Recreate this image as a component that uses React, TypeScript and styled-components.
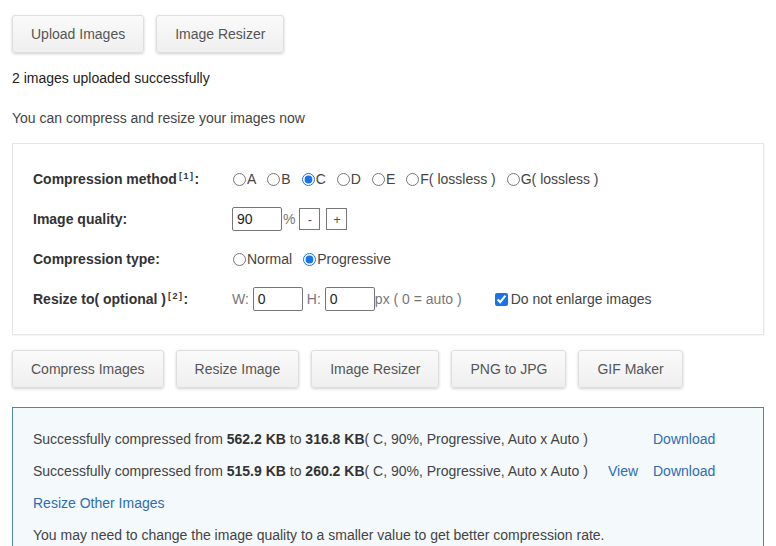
import React, { useState } from "react";
import styled, { createGlobalStyle } from "styled-components";

const GlobalStyle = createGlobalStyle`
  body {
    margin: 0;
    background: #fff;
    font-family: Arial, "Liberation Sans", sans-serif;
    font-size: 14px;
    color: #333;
  }
`;

type Result = {
  from: string;
  to: string;
  info: string;
  view?: boolean;
};

const results: Result[] = [
  { from: "562.2 KB", to: "316.8 KB", info: "( C, 90%, Progressive, Auto x Auto )" },
  { from: "515.9 KB", to: "260.2 KB", info: "( C, 90%, Progressive, Auto x Auto )", view: true },
];

const methods = ["A", "B", "C", "D", "E", "F( lossless )", "G( lossless )"];

const App: React.FC = () => {
  const [method, setMethod] = useState("C");
  const [quality, setQuality] = useState(90);
  const [type, setType] = useState("Progressive");
  const [width, setWidth] = useState("0");
  const [height, setHeight] = useState("0");
  const [noEnlarge, setNoEnlarge] = useState(true);

  return (
    <Page>
      <GlobalStyle />
      {/* 상단 버튼 */}
      <ButtonRow>
        <Button>Upload Images</Button>
        <Button>Image Resizer</Button>
      </ButtonRow>

      <Status>2 images uploaded successfully</Status>
      <Hint>You can compress and resize your images now</Hint>

      {/* 옵션 패널 */}
      <Panel>
        <FormRow>
          <Label>
            Compression method<Sup>[1]</Sup>:
          </Label>
          <Controls>
            {methods.map((m) => (
              <Option key={m} gap={10}>
                <Radio
                  type="radio"
                  name="method"
                  checked={method === m}
                  onChange={() => setMethod(m)}
                />
                {m}
              </Option>
            ))}
          </Controls>
        </FormRow>

        <FormRow>
          <Label>Image quality:</Label>
          <Controls>
            <TextInput
              value={quality}
              onChange={(e) => setQuality(Number(e.target.value) || 0)}
            />
            <Unit>%</Unit>
            <StepButton onClick={() => setQuality((q) => Math.max(0, q - 1))}>-</StepButton>
            <StepButton onClick={() => setQuality((q) => Math.min(100, q + 1))}>+</StepButton>
          </Controls>
        </FormRow>

        <FormRow>
          <Label>Compression type:</Label>
          <Controls>
            {["Normal", "Progressive"].map((t) => (
              <Option key={t} gap={10}>
                <Radio
                  type="radio"
                  name="type"
                  checked={type === t}
                  onChange={() => setType(t)}
                />
                {t}
              </Option>
            ))}
          </Controls>
        </FormRow>

        <FormRow>
          <Label>
            Resize to( optional )<Sup>[2]</Sup>:
          </Label>
          <Controls>
            <Muted>W:</Muted>
            <TextInput value={width} onChange={(e) => setWidth(e.target.value)} />
            <Muted lead>H:</Muted>
            <TextInput value={height} onChange={(e) => setHeight(e.target.value)} />
            <Muted>px ( 0 = auto )</Muted>
            <CheckLabel>
              <Checkbox
                type="checkbox"
                checked={noEnlarge}
                onChange={(e) => setNoEnlarge(e.target.checked)}
              />
              Do not enlarge images
            </CheckLabel>
          </Controls>
        </FormRow>
      </Panel>

      {/* 작업 버튼 */}
      <ButtonRow>
        <Button>Compress Images</Button>
        <Button>Resize Image</Button>
        <Button>Image Resizer</Button>
        <Button>PNG to JPG</Button>
        <Button>GIF Maker</Button>
      </ButtonRow>

      {/* 결과 */}
      <ResultBox>
        {results.map((r) => (
          <ResultRow key={r.from}>
            <span>
              Successfully compressed from <b>{r.from}</b> to <b>{r.to}</b>
              {r.info}
            </span>
            <span>{r.view && <Link href="#">View</Link>}</span>
            <Link href="#">Download</Link>
          </ResultRow>
        ))}
        <Line>
          <Link href="#">Resize Other Images</Link>
        </Line>
        <Line>
          You may need to change the image quality to a smaller value to get better
          compression rate.
        </Line>
      </ResultBox>
    </Page>
  );
};

export default App;

// Styled Components
const Page = styled.div`
  padding: 15px 12px 0;
`;

const ButtonRow = styled.div`
  display: flex;
  gap: 12px;
`;

const Button = styled.button`
  height: 38px;
  padding: 0 18px;
  font-family: Arial, "Liberation Sans", sans-serif;
  font-size: 14px;
  color: #555;
  background: linear-gradient(#fafafa, #efefef);
  border: 1px solid #dedede;
  border-radius: 3px;
  box-shadow: 0 1px 3px rgba(0, 0, 0, 0.18);
  cursor: pointer;
`;

const Status = styled.p`
  margin: 17px 0 0;
  line-height: 16px;
  color: #222;
`;

const Hint = styled.p`
  margin: 24px 0 0;
  line-height: 16px;
  color: #444;
`;

const Panel = styled.div`
  margin: 17px 0 15px;
  padding: 15px 20px 15px;
  border: 1px solid #e6e6e6;
  box-shadow: 1px 1px 1px rgba(0, 0, 0, 0.03);
`;

const FormRow = styled.div`
  display: flex;
  align-items: center;
  height: 40px;
`;

const Label = styled.div`
  width: 199px;
  font-weight: bold;
  color: #333;
`;

const Sup = styled.sup`
  font-size: 9px;
  letter-spacing: 1.5px;
  margin-left: 2px;
  vertical-align: 5px;
  line-height: 0;
`;

const Controls = styled.div`
  display: flex;
  align-items: center;
  color: #444;
`;

const Option = styled.label<{ gap: number }>`
  display: flex;
  align-items: center;
  margin-right: ${(p) => p.gap}px;
`;

const Radio = styled.input`
  width: 13px;
  height: 13px;
  margin: 0 1px 0 1px;
  accent-color: #1a73e8;
`;

const TextInput = styled.input`
  width: 50px;
  height: 24px;
  box-sizing: border-box;
  padding: 0 4px;
  border: 1px solid #767676;
  border-radius: 2px;
  font-family: Arial, "Liberation Sans", sans-serif;
  font-size: 14px;
  color: #222;
`;

const Unit = styled.span`
  color: #777;
  margin: 0 4px 0 1px;
`;

const StepButton = styled.button`
  width: 21px;
  height: 22px;
  padding: 0;
  margin-right: 6px;
  background: #fff;
  border: 1px solid #777;
  font-size: 13px;
  color: #555;
  cursor: pointer;
`;

const Muted = styled.span<{ lead?: boolean }>`
  color: #777;
  margin: 0 4px 0 ${(p) => (p.lead ? "4px" : "0")};
`;

const CheckLabel = styled.label`
  display: flex;
  align-items: center;
  margin-left: 29px;
  color: #444;
`;

const Checkbox = styled.input`
  width: 13px;
  height: 13px;
  margin: 0 3px 0 0;
  accent-color: #1a73e8;
`;

const ResultBox = styled.div`
  margin-top: 19px;
  padding: 15px 20px 20px;
  background: #f4f9fc;
  border: 1px solid #4a86b0;
  color: #444;
`;

const ResultRow = styled.div`
  display: grid;
  grid-template-columns: 575px 45px auto;
  align-items: center;
  height: 32px;

  b {
    color: #333;
  }
`;

const Line = styled.div`
  line-height: 32px;
`;

const Link = styled.a`
  color: #2f6cb5;
  text-decoration: none;
`;
